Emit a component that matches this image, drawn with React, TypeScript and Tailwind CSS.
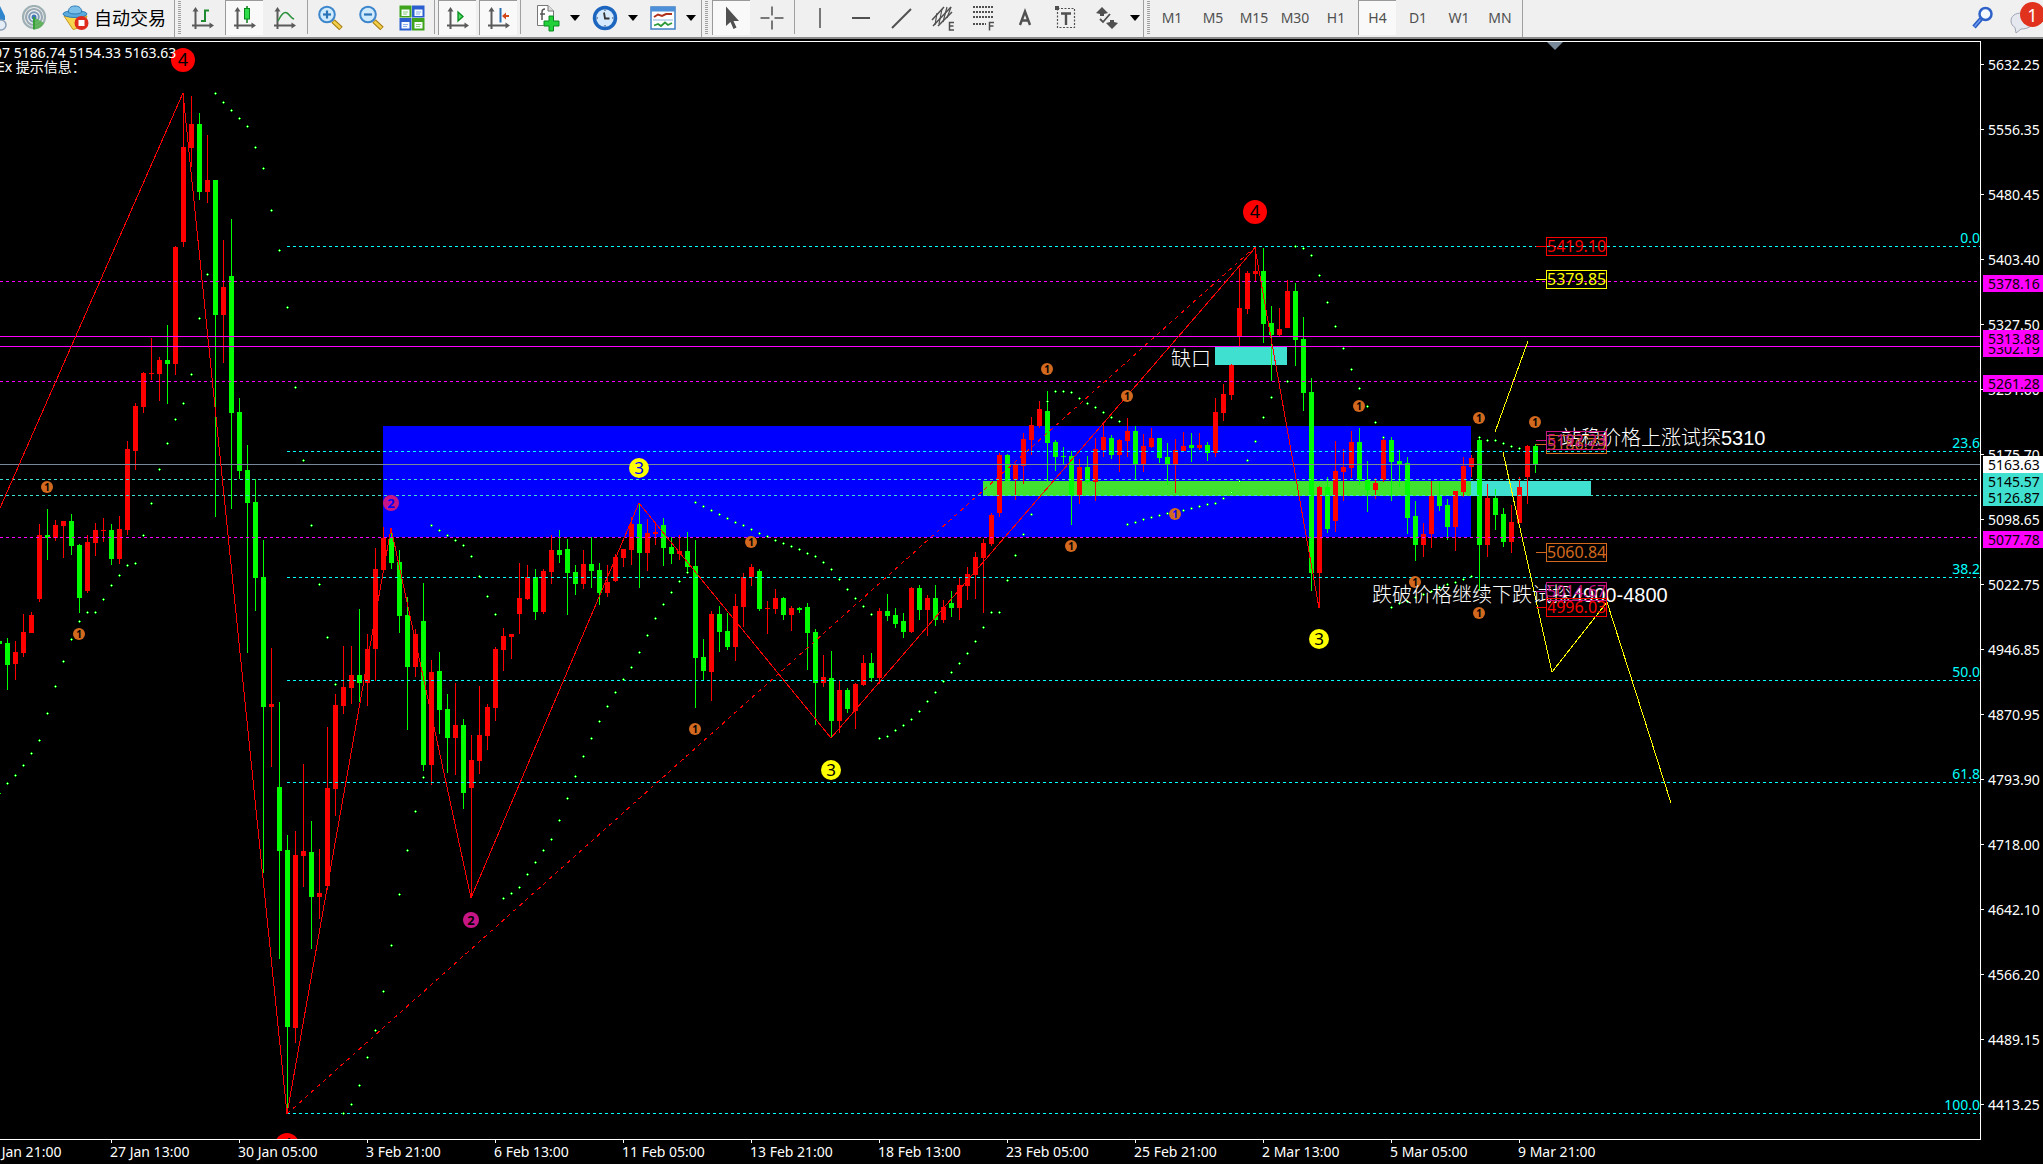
import type { ReactNode } from "react";

const FONT = "font-['Noto_Sans','Noto_Sans_CJK_SC',sans-serif]";

/* ---------- chart data (vertical positions on the price scale) ---------- */

const STEP = 8;
const FIRST_X = -1;

// direction (1 rising, 0 falling), high, body top, body bottom, low
const CANDLES: [number, number, number, number, number][] = [
  [0, 641, 641, 644, 644], [0, 638, 643, 665, 690], [1, 641, 652, 664, 680], [1, 614, 632, 653, 657],
  [1, 612, 615, 633, 633], [1, 524, 535, 599, 602], [0, 509, 535, 538, 560], [1, 520, 525, 538, 541],
  [1, 521, 521, 526, 558], [0, 514, 521, 546, 555], [0, 544, 545, 598, 613], [1, 535, 542, 591, 593],
  [1, 523, 530, 543, 556], [1, 518, 530, 531, 542], [0, 524, 530, 559, 565], [1, 516, 529, 559, 564],
  [1, 441, 449, 530, 535], [1, 403, 406, 451, 470], [1, 372, 373, 407, 413], [1, 338, 373, 374, 380],
  [1, 357, 360, 374, 401], [0, 325, 360, 364, 404], [1, 246, 247, 364, 375], [1, 93, 147, 242, 247],
  [1, 96, 124, 148, 167], [0, 113, 124, 192, 200], [1, 135, 180, 192, 203], [0, 180, 180, 315, 517],
  [1, 240, 287, 315, 363], [0, 219, 276, 413, 509], [0, 398, 412, 471, 479], [0, 445, 470, 503, 653],
  [0, 479, 502, 578, 611], [0, 540, 577, 707, 873], [1, 648, 704, 707, 767], [0, 702, 787, 851, 959],
  [0, 835, 850, 1027, 1109], [1, 831, 855, 1028, 1043], [1, 764, 851, 856, 887], [0, 821, 852, 897, 949],
  [1, 849, 893, 897, 919], [1, 727, 788, 886, 890], [1, 694, 705, 789, 816], [1, 646, 687, 706, 714],
  [1, 646, 675, 688, 704], [0, 609, 675, 683, 702], [1, 634, 649, 683, 706], [1, 548, 569, 649, 681],
  [1, 527, 538, 570, 572], [0, 528, 538, 563, 569], [0, 550, 562, 616, 633], [0, 597, 615, 667, 730],
  [1, 629, 634, 667, 677], [0, 583, 621, 765, 771], [1, 660, 672, 765, 785], [0, 652, 671, 710, 734],
  [0, 694, 709, 738, 773], [1, 683, 725, 738, 775], [0, 719, 725, 793, 809], [1, 735, 760, 788, 898],
  [1, 686, 735, 761, 774], [1, 704, 707, 736, 750], [1, 647, 649, 708, 721], [1, 628, 636, 650, 671],
  [1, 634, 634, 637, 659], [1, 563, 598, 614, 634], [1, 565, 577, 599, 600], [0, 569, 577, 612, 620],
  [1, 569, 571, 612, 614], [1, 535, 550, 572, 584], [0, 530, 550, 555, 563], [0, 539, 549, 573, 615],
  [0, 565, 572, 584, 595], [1, 550, 564, 584, 589], [0, 537, 564, 571, 588], [0, 563, 570, 593, 605],
  [1, 565, 582, 593, 597], [1, 554, 557, 581, 582], [1, 549, 549, 558, 567], [1, 517, 524, 550, 565],
  [0, 503, 524, 553, 588], [1, 519, 533, 553, 571], [1, 522, 532, 534, 545], [0, 518, 525, 548, 566],
  [0, 537, 547, 554, 564], [1, 535, 551, 554, 560], [0, 532, 551, 567, 572], [0, 540, 566, 658, 708],
  [0, 639, 657, 671, 680], [1, 611, 614, 672, 701], [0, 606, 614, 632, 652], [0, 613, 631, 647, 650],
  [1, 594, 606, 647, 661], [1, 573, 577, 607, 627], [1, 564, 567, 577, 586], [0, 569, 571, 609, 611],
  [1, 601, 608, 609, 634], [1, 589, 598, 609, 614], [0, 597, 598, 615, 620], [1, 606, 608, 615, 631],
  [0, 607, 608, 610, 613], [0, 603, 607, 633, 670], [0, 629, 632, 683, 725], [1, 655, 677, 683, 687],
  [0, 651, 678, 721, 738], [1, 681, 690, 721, 733], [0, 688, 690, 709, 713], [1, 683, 684, 711, 729],
  [1, 655, 663, 685, 686], [0, 653, 663, 678, 682], [1, 608, 611, 678, 684], [0, 594, 611, 616, 621],
  [0, 608, 615, 624, 628], [0, 613, 621, 632, 638], [1, 587, 588, 632, 633], [0, 585, 588, 610, 620],
  [1, 595, 598, 610, 636], [0, 585, 598, 620, 626], [1, 600, 607, 620, 623], [0, 591, 603, 608, 617],
  [1, 578, 585, 608, 620], [1, 567, 574, 586, 600], [1, 552, 557, 575, 599], [1, 539, 543, 558, 613],
  [1, 513, 515, 544, 546], [1, 453, 455, 513, 517], [0, 454, 455, 481, 481], [1, 463, 465, 480, 500],
  [1, 433, 439, 466, 484], [1, 417, 425, 440, 455], [1, 401, 409, 426, 428], [0, 391, 411, 443, 481],
  [0, 440, 442, 457, 471], [0, 447, 456, 457, 465], [0, 451, 456, 496, 525], [1, 459, 467, 495, 504],
  [0, 456, 467, 482, 484], [1, 438, 449, 482, 501], [1, 424, 437, 450, 457], [0, 435, 438, 455, 459],
  [1, 439, 440, 455, 472], [1, 418, 431, 441, 457], [0, 426, 431, 464, 479], [1, 434, 446, 464, 472],
  [1, 428, 438, 447, 448], [0, 438, 438, 458, 463], [0, 443, 457, 464, 485], [1, 439, 450, 464, 493],
  [1, 432, 446, 451, 451], [0, 433, 445, 448, 462], [1, 433, 445, 448, 450], [0, 442, 445, 453, 461],
  [1, 398, 412, 453, 457], [1, 384, 394, 413, 421], [1, 364, 365, 395, 400], [1, 268, 308, 336, 346],
  [1, 271, 273, 309, 314], [1, 247, 271, 274, 281], [0, 248, 271, 324, 343], [0, 306, 323, 335, 381],
  [1, 308, 329, 335, 337], [1, 280, 291, 328, 328], [0, 283, 291, 340, 366], [0, 317, 339, 393, 411],
  [0, 378, 392, 573, 591], [1, 486, 487, 573, 608], [0, 477, 487, 529, 533], [1, 441, 471, 521, 532],
  [1, 449, 467, 472, 501], [1, 431, 442, 468, 478], [0, 428, 442, 480, 485], [0, 461, 480, 490, 512],
  [1, 478, 483, 490, 499], [1, 439, 440, 480, 482], [0, 437, 440, 462, 501], [0, 450, 461, 464, 487],
  [0, 457, 463, 518, 534], [0, 501, 516, 545, 561], [1, 523, 534, 545, 557], [1, 481, 496, 534, 548],
  [0, 482, 496, 506, 511], [0, 499, 505, 527, 540], [1, 491, 491, 527, 551], [1, 457, 466, 492, 497],
  [1, 455, 458, 467, 477], [0, 437, 440, 545, 591], [1, 484, 498, 545, 557], [0, 489, 498, 515, 530],
  [0, 508, 514, 542, 547], [1, 505, 522, 542, 553], [1, 477, 487, 523, 523], [1, 445, 446, 477, 504],
  [0, 444, 446, 465, 473],
];

// runs of stop-and-reverse dots: first x, then one value per bar
const DOT_RUNS: { x: number; ys: number[] }[] = [
  { x: -1, ys: [793, 783, 775, 765, 753, 740, 713, 686, 661, 639, 621, 612, 612, 599, 585, 575, 565, 563, 535, 503, 469, 443, 419, 403, 374, 318, 274] },
  { x: 215, ys: [93, 102, 110, 118, 126, 147, 168, 210, 250, 307, 387, 460, 525, 584, 637, 684] },
  { x: 343, ys: [1113, 1104, 1085, 1057, 1030, 991, 945, 894, 850, 811, 777] },
  { x: 431, ys: [525, 530, 535, 540, 545, 556, 576, 596, 614] },
  { x: 503, ys: [898, 893, 887, 874, 862, 850, 839, 820, 798, 776, 756, 738, 721, 706, 692, 679, 667, 652, 635, 618, 604, 592, 581, 572] },
  { x: 695, ys: [502, 506, 510, 514, 518, 522, 525, 529, 533, 536, 540, 543, 546, 549, 553, 556, 562, 569, 579, 589, 598, 606, 614] },
  { x: 879, ys: [738, 736, 730, 725, 719, 711, 701, 692, 681, 672, 663, 653, 641, 627, 612, 612, 580, 555, 534, 514] },
  { x: 1047, ys: [401, 391, 391, 392, 398, 403, 407, 412, 417, 421] },
  { x: 1127, ys: [524, 522, 519, 517, 515, 513, 512, 510, 508, 506, 504, 503, 498, 492, 481, 460, 441, 417, 397] },
  { x: 1287, ys: [381, 246, 248, 255, 275, 302, 326, 348, 369, 388, 406, 422, 437] },
  { x: 1391, ys: [607, 603, 601, 597, 594, 591, 587, 584, 582, 579, 576, 437, 440, 440, 443, 446, 448] },
];

const FIB_LEVELS: [number, string][] = [
  [246, "0.0"], [451, "23.6"], [577, "38.2"], [680, "50.0"], [782, "61.8"], [1113, "100.0"],
];

const PRICES = [
  "5632.25", "5556.35", "5480.45", "5403.40", "5327.50", "5251.60", "5175.70", "5098.65", "5022.75",
  "4946.85", "4870.95", "4793.90", "4718.00", "4642.10", "4566.20", "4489.15", "4413.25",
];

const TIMES = [
  "22 Jan 21:00", "27 Jan 13:00", "30 Jan 05:00", "3 Feb 21:00", "6 Feb 13:00", "11 Feb 05:00", "13 Feb 21:00",
  "18 Feb 13:00", "23 Feb 05:00", "25 Feb 21:00", "2 Mar 13:00", "5 Mar 05:00", "9 Mar 21:00",
];

const MARKS: { x: number; y: number; n: 1 | 2 | 3 | 4; ink?: string }[] = [
  { x: 183, y: 60, n: 4 }, { x: 1255, y: 212, n: 4 }, { x: 287, y: 1145, n: 4 },
  { x: 639, y: 468, n: 3, ink: "#0000ff" }, { x: 831, y: 770, n: 3 }, { x: 1319, y: 639, n: 3 },
  { x: 391, y: 503, n: 2, ink: "#0000ff" }, { x: 471, y: 920, n: 2 },
  { x: 47, y: 487, n: 1 }, { x: 79, y: 634, n: 1 }, { x: 751, y: 542, n: 1 }, { x: 695, y: 729, n: 1 },
  { x: 1047, y: 369, n: 1 }, { x: 1127, y: 396, n: 1 }, { x: 1071, y: 546, n: 1 }, { x: 1175, y: 514, n: 1, ink: "#0000ff" },
  { x: 1359, y: 406, n: 1 }, { x: 1479, y: 418, n: 1 }, { x: 1415, y: 582, n: 1 }, { x: 1479, y: 613, n: 1 },
  { x: 1535, y: 422, n: 1 },
];

const MARK_STYLE = {
  1: { r: 6, fill: "#d2691e", size: 10, weight: 700, dy: 4 },
  2: { r: 8, fill: "#c71585", size: 13, weight: 700, dy: 5 },
  3: { r: 10, fill: "#ffff00", size: 17, weight: 400, dy: 6 },
  4: { r: 12, fill: "#ff0000", size: 18, weight: 400, dy: 6 },
};

const PRICE_BOXES: { y: number; text: string; color: string }[] = [
  { y: 246, text: "5419.10", color: "#ff0000" },
  { y: 279, text: "5379.85", color: "#ffff00" },
  { y: 444, text: "5186.73", color: "#d2691e" },
  { y: 440, text: "5192.23", color: "#c71585" },
  { y: 552, text: "5060.84", color: "#d2691e" },
  { y: 591, text: "5014.67", color: "#c71585" },
  { y: 607, text: "4996.03", color: "#ff0000" },
];

/* ---------- toolbar icons ---------- */

function Axes({ children }: { children?: ReactNode }) {
  return (
    <svg width="24" height="24" viewBox="0 0 24 24" fill="none">
      <path d="M4.5 3V23M1 19.5H21" stroke="#5a5a5a" strokeWidth="2" />
      <path d="M1.5 5.5L4.5 1L7.5 5.5ZM18.5 16.5L23 19.5L18.5 22.5Z" fill="#5a5a5a" />
      {children}
    </svg>
  );
}

const IconBars = () => (
  <Axes><path d="M14 3.500V16M14 4.500H18M10 15H14" stroke="#1f8a2f" strokeWidth="2" /></Axes>
);
const IconCandle = () => (
  <Axes>
    <path d="M14 0V17" stroke="#0a7a1a" strokeWidth="1.500" />
    <rect x="11.500" y="2.500" width="5" height="10.500" fill="#2fdc4a" stroke="#0a8a1e" />
  </Axes>
);
const IconLine = () => (
  <Axes><path d="M5 15C8 9 11 5 14 7S18 12 21 13" stroke="#2c8f3a" strokeWidth="1.600" /></Axes>
);
const IconScroll = () => (
  <Axes><path d="M12 6L17 10.500L12 15Z" fill="#4fe066" stroke="#0a8a1e" strokeWidth="1.300" /></Axes>
);
const IconShift = () => (
  <Axes>
    <path d="M13.500 2V16.500" stroke="#2a6fb0" strokeWidth="2" />
    <path d="M15 10L19 6.500V9H22V11H19V13.500Z" fill="#d2461a" />
  </Axes>
);
const IconZoom = ({ plus }: { plus: boolean }) => (
  <svg width="26" height="26" viewBox="0 0 26 26" fill="none">
    <path d="M16 16L24 23.500" stroke="#a87c10" strokeWidth="5" />
    <path d="M16.500 16.500L23.500 23" stroke="#f2cf4a" strokeWidth="2.600" />
    <circle cx="10" cy="9.500" r="7.800" fill="#cfeafd" stroke="#3d86cc" strokeWidth="2" />
    <path d="M6 9.500H14" stroke="#2b74b8" strokeWidth="2.200" />
    {plus && <path d="M10 5.500V13.500" stroke="#2b74b8" strokeWidth="2.200" />}
  </svg>
);
const IconTile = () => (
  <svg width="26" height="26" viewBox="0 0 26 26">
    <rect x="0.500" y="0.500" width="12" height="12" fill="#3fa31c" />
    <rect x="13" y="0.500" width="12.500" height="12" fill="#2b5fd0" />
    <rect x="0.500" y="13" width="12" height="12.500" fill="#2b5fd0" />
    <rect x="13" y="13" width="12.500" height="12.500" fill="#3fa31c" />
    <g fill="#f6fbff">
      <rect x="2.500" y="4.500" width="8" height="6.500" /><rect x="15.500" y="4.500" width="8" height="6.500" />
      <rect x="2.500" y="17" width="8" height="6.500" /><rect x="15.500" y="17" width="8" height="6.500" />
    </g>
    <path d="M4 7H9M4 9H8M17 19.500H22M17 21.500H21" stroke="#8fcf7a" />
    <path d="M17 7H22M17 9H21M4 19.500H9M4 21.500H8" stroke="#8fb0ee" />
  </svg>
);
const IconSignal = () => (
  <svg width="26" height="26" viewBox="0 0 26 26" fill="none">
    <circle cx="13" cy="12" r="11" stroke="#9fb0b4" strokeWidth="2.200" />
    <circle cx="13" cy="12" r="8" stroke="#9aa9b4" strokeWidth="2.200" />
    <circle cx="13" cy="12" r="4.800" stroke="#7f9bb8" strokeWidth="2" />
    <path d="M13 12L14 24.500A12 12 0 0 0 23 18Z" fill="#53b04c" opacity="0.850" />
    <circle cx="13" cy="12" r="2.500" fill="#3f76b5" />
    <path d="M13 12V24.500" stroke="#35a035" strokeWidth="2" />
  </svg>
);
const IconAuto = () => (
  <svg width="28" height="26" viewBox="0 0 28 26">
    <path d="M2 11L11 24.500L20 22L25 11Z" fill="#f7d54a" stroke="#c9971a" />
    <ellipse cx="13" cy="9" rx="12" ry="3.500" fill="#5aa9dc" stroke="#2f7cb4" />
    <path d="M6.500 7.500C6 3 9 1 13 1S20 3 19.500 7.500C17 9.500 9 9.500 6.500 7.500Z" fill="#7cc0ea" stroke="#2f7cb4" />
    <circle cx="19.500" cy="18" r="7" fill="#e02a1c" />
    <rect x="16.500" y="15" width="6" height="6" fill="#fff" />
  </svg>
);
const IconTemplate = () => (
  <svg width="28" height="28" viewBox="0 0 28 28">
    <path d="M3.500 1.500H14L19.500 7V21.500H3.500Z" fill="#fff" stroke="#777" />
    <path d="M14 1.500V7H19.500" fill="#ddd" stroke="#777" />
    <path d="M8 16V8C8 6 9 5 11 5M6 10H11" fill="none" stroke="#555" strokeWidth="1.500" />
    <path d="M15 12H19.500V17H25V22H19.500V27H15V22H10V17H15Z" fill="#22d03a" stroke="#0a8a1e" />
  </svg>
);
const IconClock = () => (
  <svg width="26" height="26" viewBox="0 0 26 26" fill="none">
    <circle cx="13" cy="13" r="10.500" fill="#d6eaff" stroke="#1c66bf" strokeWidth="3.500" />
    <path d="M13 4.500V6M13 20V21.500M4.500 13H6M20 13H21.500" stroke="#5c7898" strokeWidth="1.500" />
    <path d="M12 7.500L13 13.500H17.500" stroke="#333" strokeWidth="1.800" />
  </svg>
);
const IconIndicators = () => (
  <svg width="26" height="24" viewBox="0 0 26 24" fill="none">
    <rect x="1" y="1" width="24" height="22" fill="#fff" stroke="#3f7fc4" strokeWidth="1.500" />
    <rect x="1" y="1" width="24" height="4.500" fill="#4d8fd8" />
    <path d="M4 11L8 8.500L12 10L16 8L22 8" stroke="#b0301c" strokeWidth="2" />
    <path d="M3 14H23" stroke="#8db4de" />
    <path d="M4 19.500L8 18L11 20L15 16.500L18 19L22 17" stroke="#2c9a3a" strokeWidth="1.800" />
  </svg>
);
const Tool = ({ children }: { children: ReactNode }) => (
  <svg width="26" height="26" viewBox="0 0 26 26" fill="none" stroke="#505050" strokeWidth="2">{children}</svg>
);
const IconCursor = () => (
  <Tool><path d="M7 1.500V21L11.500 17L14.500 24L17.500 22.500L14.500 16H20Z" fill="#505050" stroke="none" /></Tool>
);
const IconCross = () => (
  <Tool><path d="M13 1.500V10.500M13 15.500V24.500M1.500 13H10.500M15.500 13H24.500" strokeWidth="1.500" /></Tool>
);
const IconChannel = () => (
  <Tool>
    <path d="M2 15L14 2M3 21L21 2M8 21L22 7" strokeWidth="1.500" />
    <path d="M7 8L5 20M12 4L9 19M17 2L13 17M21 2L17 13" strokeWidth="1.200" />
    <path d="M24 17.500H19.500V25H24M19.500 21H23.500" strokeWidth="1.500" />
  </Tool>
);
const IconFib = () => (
  <Tool>
    <path d="M2 2H22M2 7H22M2 12H22M2 19H15" strokeWidth="1.800" strokeDasharray="2 1" />
    <path d="M23 17.500H18.500V25.500M18.500 21H22.500" strokeWidth="1.500" />
  </Tool>
);
const IconText = () => (
  <Tool><path d="M8 20L13 6.500L18 20M9.500 15.500H16.500" strokeWidth="2.400" /></Tool>
);
const IconLabel = () => (
  <Tool>
    <rect x="4.500" y="3.500" width="17" height="19" strokeWidth="1.200" strokeDasharray="2 1.500" />
    <path d="M8 8.500H18M13 8.500V20" strokeWidth="2.400" />
    <rect x="2" y="1" width="4" height="4" fill="#505050" stroke="none" />
  </Tool>
);
const IconArrows = () => (
  <Tool>
    <path d="M8 2L14 8L10 9V11H6V9L2 8ZM18 24L12 18L16 17V15H20V17L24 18Z" fill="#505050" stroke="none" />
    <path d="M6 14L9 17L16 9" strokeWidth="1.800" />
  </Tool>
);

/* ---------- toolbar pieces ---------- */

function IconButton({ label, pressed, children }: { label: string; pressed?: boolean; children: ReactNode }) {
  return (
    <button
      type="button"
      aria-label={label}
      aria-pressed={pressed}
      className={
        pressed
          ? "flex h-[35px] w-[38px] shrink-0 items-center justify-center border-t border-l border-[#9a9a9a] bg-[#f9f9f9]"
          : "flex h-[35px] w-[38px] shrink-0 items-center justify-center"
      }
    >
      {children}
    </button>
  );
}

function MenuButton({ label, children }: { label: string; children: ReactNode }) {
  return (
    <button type="button" aria-label={label} className="flex h-[35px] w-[55px] shrink-0 items-center justify-between pr-[3px] pl-[6px]">
      {children}
      <Caret />
    </button>
  );
}

const Caret = () => (
  <svg width="10" height="6" viewBox="0 0 10 6" className="shrink-0"><path d="M0 0H10L5 6Z" fill="#000" /></svg>
);

const Divider = () => <span className="h-[34px] w-px shrink-0 bg-[#a0a0a0]" />;
const Grip = () => (
  <span className="mt-px h-[33px] w-[3px] shrink-0 bg-[repeating-linear-gradient(to_bottom,#a0a0a0_0_1px,#f0f0f0_1px_2px)]" />
);
const GroupEdge = () => (
  <span className="flex h-[37px] shrink-0 gap-[3px]">
    <span className="w-px bg-[#a0a0a0]" />
    <Grip />
  </span>
);

const FRAMES = ["M1", "M5", "M15", "M30", "H1", "H4", "D1", "W1", "MN"];

function Toolbar() {
  return (
    <header className="flex h-[39px] shrink-0 items-start overflow-hidden border-b-2 border-[#8a8a8a] bg-[#f0f0f0] text-[#505050]">
      <button type="button" aria-label="市场" className="flex h-[35px] w-[14px] shrink-0 items-center">
        <svg width="8" height="26" viewBox="0 0 8 26">
          <path d="M0 1L5 11V15H0Z" fill="#2f86cc" />
          <circle cx="1" cy="20" r="5" fill="#e4ecf5" stroke="#8aa0b8" strokeWidth="1.500" />
        </svg>
      </button>
      <button type="button" aria-label="信号" className="flex h-[35px] w-[40px] shrink-0 items-center justify-center"><IconSignal /></button>
      <button type="button" className="flex h-[35px] w-[120px] shrink-0 items-center gap-[4px] pl-[8px] text-[18px] leading-[24px] whitespace-nowrap text-black">
        <IconAuto />
        自动交易
      </button>
      <GroupEdge />
      <div className="ml-[3px] flex gap-[3px]">
        <IconButton label="柱状图"><IconBars /></IconButton>
        <IconButton label="阴阳烛" pressed><IconCandle /></IconButton>
        <IconButton label="折线图"><IconLine /></IconButton>
        <Divider />
        <IconButton label="放大"><IconZoom plus /></IconButton>
        <IconButton label="缩小"><IconZoom plus={false} /></IconButton>
        <IconButton label="平铺窗口"><IconTile /></IconButton>
        <Divider />
        <IconButton label="自动滚动" pressed><IconScroll /></IconButton>
        <IconButton label="图表平移" pressed><IconShift /></IconButton>
        <Divider />
      </div>
      <div className="ml-[7px] flex gap-[3px]">
        <MenuButton label="模板"><IconTemplate /></MenuButton>
        <MenuButton label="时间周期"><IconClock /></MenuButton>
        <MenuButton label="指标"><IconIndicators /></MenuButton>
      </div>
      <span className="ml-[2px]"><GroupEdge /></span>
      <div className="ml-[4px] flex gap-[3px]">
        <IconButton label="光标" pressed><IconCursor /></IconButton>
        <IconButton label="十字准线"><IconCross /></IconButton>
        <Divider />
      </div>
      <div className="ml-[6px] flex gap-[3px]">
        <IconButton label="垂直线"><Tool><path d="M13 3V23" strokeWidth="1.500" /></Tool></IconButton>
        <IconButton label="水平线"><Tool><path d="M4 13H22" /></Tool></IconButton>
        <IconButton label="趋势线"><Tool><path d="M3 23L22 4" /></Tool></IconButton>
        <IconButton label="等距通道"><IconChannel /></IconButton>
        <IconButton label="斐波那契"><IconFib /></IconButton>
        <IconButton label="文字"><IconText /></IconButton>
        <IconButton label="文字标签"><IconLabel /></IconButton>
        <MenuButton label="箭头"><IconArrows /></MenuButton>
      </div>
      <GroupEdge />
      <div className="ml-[3px] flex gap-[3px]">
        {FRAMES.map((f) => (
          <button
            key={f}
            type="button"
            aria-pressed={f === "H4"}
            className={
              f === "H4"
                ? "h-[35px] w-[38px] border-t border-l border-[#9a9a9a] bg-[#f9f9f9] text-[14px] leading-[20px]"
                : "h-[35px] w-[38px] text-[14px] leading-[20px]"
            }
          >
            {f}
          </button>
        ))}
        <span className="h-[37px] w-px bg-[#a0a0a0]" />
      </div>
      <div className="ml-auto flex items-start">
        <button type="button" aria-label="搜索" className="flex h-[35px] w-[38px] items-center justify-center">
          <svg width="24" height="24" viewBox="0 0 24 24" fill="none">
            <path d="M10 13L3 21" stroke="#2b5cc4" strokeWidth="4.500" />
            <path d="M9.500 13.500L3.500 20.500" stroke="#6d9cf0" strokeWidth="1.500" />
            <circle cx="14.500" cy="8" r="6" fill="#f4f8ff" stroke="#2f62c8" strokeWidth="2.500" />
          </svg>
        </button>
        <button type="button" aria-label="通知" className="relative h-[35px] w-[41px] overflow-hidden">
          <svg width="24" height="22" viewBox="0 0 24 22" className="absolute top-[12px] left-[8px]">
            <path d="M12 1C5 1 1 4 1 9C1 12 3 14.500 5 15.500L6 21L11 17C18 17 23 14 23 9S18 1 12 1Z" fill="#e6e8f0" stroke="#a0a4b4" />
          </svg>
          <span className="absolute top-[2px] left-[18px] flex size-[25px] items-center justify-center rounded-full bg-[#e0321c] text-[18px] leading-[24px] text-white">
            1
          </span>
        </button>
      </div>
    </header>
  );
}

/* ---------- chart ---------- */

function HLine({ y, color, dash, from = 0 }: { y: number; color: string; dash?: boolean; from?: number }) {
  return (
    <line x1={from} x2="100%" y1={y + 0.5} y2={y + 0.5} stroke={color} strokeDasharray={dash ? "3 3" : undefined} shapeRendering="crispEdges" />
  );
}

function Plot() {
  return (
    <svg className="block size-full" role="img" aria-label="价格走势图">
      <g transform="translate(0,-42)">
        <g shapeRendering="crispEdges">
          <rect x="383" y="426" width="1088" height="111" fill="#0000ff" />
          <rect x="983" y="481" width="488" height="15" fill="#40e22f" />
          <rect x="1471" y="481" width="120" height="15" fill="#40e0d0" />
          <rect x="1215" y="347" width="72" height="18" fill="#40e0d0" />
        </g>

        <g shapeRendering="crispEdges">
          {CANDLES.map(([up, high, top, bottom, low], i) => {
            const x = FIRST_X + i * STEP;
            const fill = up ? "#ff0000" : "#00ff00";
            return (
              <g key={i} fill={fill}>
                <rect x={x} y={high} width="1" height={Math.max(1, low - high)} />
                <rect x={x - 2} y={top} width="5" height={Math.max(1, bottom - top)} />
              </g>
            );
          })}
        </g>

        {FIB_LEVELS.map(([y]) => <HLine key={y} y={y} color="#00ffff" dash from={287} />)}
        {[281, 381, 537].map((y) => <HLine key={y} y={y} color="#ff00ff" dash />)}
        {[336, 346].map((y) => <HLine key={y} y={y} color="#ff00ff" />)}
        {[479, 495].map((y) => <HLine key={y} y={y} color="#40e0d0" dash />)}
        <HLine y={464} color="#778899" />

        <g shapeRendering="crispEdges">
          {DOT_RUNS.map((run) =>
            run.ys.map((y, i) => {
              const x = run.x + i * STEP;
              return (
                <g key={x}>
                  <path d={`M${x - 1} ${y}h3v1h-3zM${x} ${y - 1}h1v3h-1z`} fill="#00ff00" />
                  <rect x={x} y={y} width="1" height="1" fill="#d0ffd0" />
                </g>
              );
            }),
          )}
        </g>

        <g fill="none" stroke="#ff0000" shapeRendering="crispEdges">
          <polyline points="0,508 183,93 287,1114 391,528 471,898 639,503 831,738 1255,248 1319,608" />
          <line x1="287" y1="1114" x2="1255" y2="247" strokeDasharray="4 4" />
        </g>
        <g fill="none" stroke="#ffff00" shapeRendering="crispEdges">
          <line x1="1495" y1="432" x2="1528" y2="341" />
          <polyline points="1503,452 1552,672 1607,602 1671,803" />
        </g>

        {MARKS.map(({ x, y, n, ink }) => {
          const m = MARK_STYLE[n];
          return (
            <g key={`${x}-${y}`}>
              <circle cx={x} cy={y} r={m.r} fill={m.fill} />
              <text x={x} y={y + m.dy} textAnchor="middle" fontSize={m.size} fontWeight={m.weight} fill={ink ?? "#000000"}>
                {n}
              </text>
            </g>
          );
        })}

        <g className="font-['Liberation_Sans','Noto_Sans_CJK_SC',sans-serif] font-light" fontSize="20" fill="#ffffff">
          <text x="1171" y="366">缺口</text>
          <text x="1561" y="445">站稳价格上涨试探5310</text>
          <text x="1372" y="602">跌破价格继续下跌试探4900-4800</text>
        </g>

        {PRICE_BOXES.map(({ y, text, color }) => (
          <g key={text}>
            <path d={`M1536 ${y + 0.5}H1546`} stroke={color} />
            <rect x="1546.5" y={y - 8.5} width="60" height="18" fill="none" stroke={color} />
            <text x="1547" y={y + 6} fontSize="16" fill={color}>{text}</text>
          </g>
        ))}

        <g fontSize="14" fill="#00ffff" textAnchor="end">
          {FIB_LEVELS.map(([y, label]) => <text key={label} x="100%" y={y - 3}>{label}</text>)}
        </g>

        <path d="M1547 42H1563L1555 50Z" fill="#778899" />
        <g fontSize="14" fill="#ffffff">
          <text x="-6" y="58">07 5186.74 5154.33 5163.63</text>
          <text x="-3" y="72">Ex 提示信息：</text>
        </g>
      </g>
    </svg>
  );
}

const Tag = ({ tone, children }: { tone: string; children: ReactNode }) => (
  <span className={`absolute left-[2px] h-[17px] w-full pl-[5px] ${tone}`}>{children}</span>
);

function PriceAxis() {
  return (
    <aside className="relative w-[62px] shrink-0 overflow-hidden text-[14px] leading-[17px] text-white">
      <ol className="-mt-[9px]">
        {PRICES.map((p) => (
          <li key={p} className="flex h-[65px] items-center">
            <span className="h-px w-[3px] bg-white" />
            <span className="ml-[4px]">{p}</span>
          </li>
        ))}
      </ol>
      <Tag tone="top-[234px] bg-[#ff00ff] text-black">5378.16</Tag>
      <Tag tone="top-[299px] bg-[#ff00ff] text-black">5302.19</Tag>
      <Tag tone="top-[289px] bg-[#ff00ff] text-black">5313.88</Tag>
      <Tag tone="top-[334px] bg-[#ff00ff] text-black">5261.28</Tag>
      <Tag tone="top-[448px] bg-[#40e0d0] text-black">5126.87</Tag>
      <Tag tone="top-[432px] bg-[#40e0d0] text-black">5145.57</Tag>
      <Tag tone="top-[415px] bg-white text-black">5163.63</Tag>
      <Tag tone="top-[490px] bg-[#ff00ff] text-black">5077.78</Tag>
    </aside>
  );
}

export default function App() {
  return (
    <div className={`flex h-screen flex-col overflow-hidden bg-black ${FONT}`}>
      <Toolbar />
      <main className="flex min-h-0 flex-1 flex-col pt-[2px]">
        <div className="flex min-h-0 flex-1">
          <div className="min-w-0 flex-1 overflow-hidden border-t border-r border-b border-white">
            <Plot />
          </div>
          <PriceAxis />
        </div>
        <ol className="-ml-[18px] flex h-[24px] shrink-0 overflow-hidden text-[14px] leading-[20px] whitespace-nowrap text-white">
          {TIMES.map((t) => (
            <li key={t} className="w-[128px] shrink-0">
              <span className="ml-px block h-[3px] w-px bg-white" />
              <span className="-mt-[1px] block">{t}</span>
            </li>
          ))}
        </ol>
      </main>
    </div>
  );
}
